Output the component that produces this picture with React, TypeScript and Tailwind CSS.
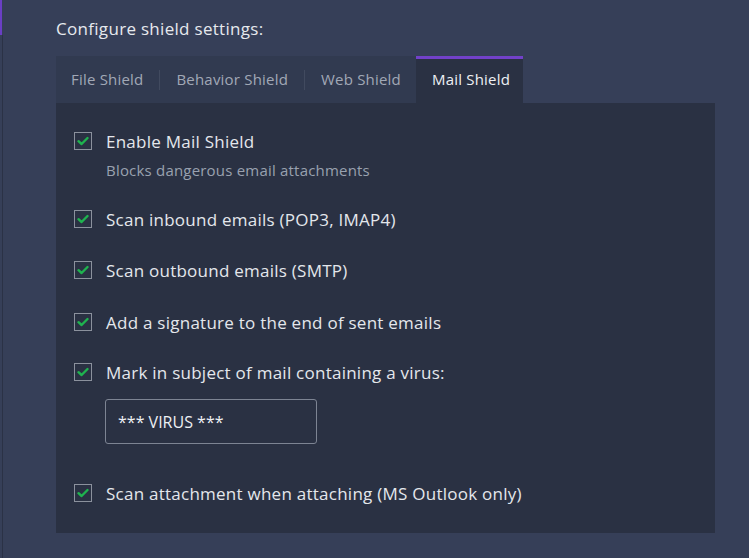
import React from 'react';

const tabs = ['File Shield', 'Behavior Shield', 'Web Shield', 'Mail Shield'];

const CheckBox: React.FC = () => (
  <span className="w-[18px] h-[18px] shrink-0 border border-[#8b919d] flex items-center justify-center">
    <svg width="12" height="10" viewBox="0 0 12 10">
      <path d="M1.5 5.2 L4.6 8 L10.5 2" fill="none" stroke="#1fb34f" strokeWidth="2.4" strokeLinecap="round" strokeLinejoin="round" />
    </svg>
  </span>
);

const Option: React.FC<{ label: string; className?: string; children?: React.ReactNode }> = ({ label, className, children }) => (
  <div className={className}>
    <label className="flex items-center gap-[14px]">
      <CheckBox />
      <span className="text-[17px] text-[#e4e7ec] leading-none tracking-[0.25px]">{label}</span>
    </label>
    {children}
  </div>
);

const App: React.FC = () => {
  return (
    <div
      className="w-[749px] h-[558px] bg-[#363f58] relative overflow-hidden"
      style={{ fontFamily: '"Open Sans", Lato, sans-serif' }}
    >
      <div className="absolute left-0 top-0 w-[2px] h-[35px] bg-[#6a3fc4]" />
      <div className="absolute left-[2px] top-[35px] bottom-0 w-px bg-[#2b3246]" />

      <div className="pl-[56px] pt-[19px] w-[715px]">
        <h2 className="text-[17px] text-[#e6e9ee] leading-[20px] mb-[17px] tracking-[0.3px]">Configure shield settings:</h2>

        <div className="flex items-stretch h-[47px]">
          <div className="flex items-center bg-[#313a50] h-[47px]">
            {tabs.slice(0, 3).map((t, i) => (
              <div key={t} className="flex items-center h-full">
                <span className="px-[15px] text-[15px] text-[#a1a8b6] tracking-[0.2px]">{t}</span>
                {i < 2 && <span className="w-px h-[20px] bg-[#414a5f] mx-px" />}
              </div>
            ))}
          </div>
          <div className="h-full bg-[#2a3143] border-t-[3px] border-[#7241c9] flex items-center px-[16px] w-[107px]">
            <span className="text-[15px] text-[#eef0f4] -mt-[3px] tracking-[0.2px] whitespace-nowrap">Mail Shield</span>
          </div>
        </div>

        <div className="bg-[#2a3143] h-[430px] pl-[18px] pt-[29px]">
          <Option label="Enable Mail Shield">
            <p className="ml-[32px] mt-[13px] text-[15px] text-[#99a1af] leading-none tracking-[0.2px]">Blocks dangerous email attachments</p>
          </Option>
          <Option label="Scan inbound emails (POP3, IMAP4)" className="mt-[32px]" />
          <Option label="Scan outbound emails (SMTP)" className="mt-[33px]" />
          <Option label="Add a signature to the end of sent emails" className="mt-[34px]" />
          <Option label="Mark in subject of mail containing a virus:" className="mt-[32px]">
            <div className="ml-[31px] mt-[18px] w-[212px] h-[45px] border border-[#7d8493] rounded-[3px] flex items-center px-[12px] text-[16px] text-[#eef0f4]">
              *** VIRUS ***
            </div>
          </Option>
          <Option label="Scan attachment when attaching (MS Outlook only)" className="mt-[40px]" />
        </div>
      </div>
    </div>
  );
};

export default App;
